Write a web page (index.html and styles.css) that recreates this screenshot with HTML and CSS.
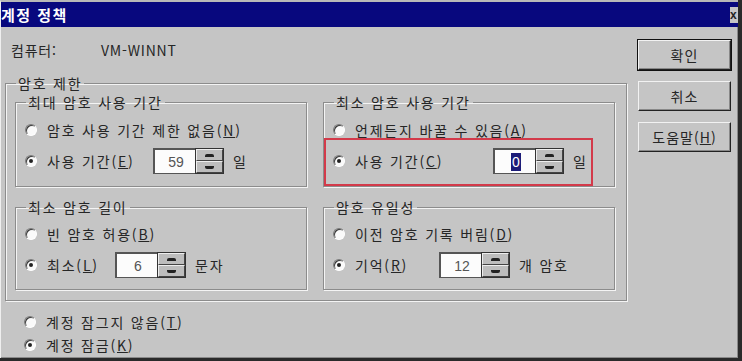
FILE: index.html
```html
<!DOCTYPE html>
<html lang="ko">
<head>
    <meta charset="UTF-8">
    <title>계정 정책</title>
    <link rel="stylesheet" href="styles.css">
</head>
<body>

<div class="dialog">
    <div class="titlebar">
        <span class="title">계정 정책</span>
        <span class="close">x</span>
    </div>
    <div class="content">
        <div class="main">
            <div class="computer">
                <span class="label">컴퓨터:</span>
                <span>VM-WINNT</span>
            </div>

            <fieldset class="group outer">
                <legend>암호 제한</legend>
                <div class="grid">
                    <fieldset class="group sub top">
                        <legend>최대 암호 사용 기간</legend>
                        <div class="row"><span class="radio"></span>암호 사용 기간 제한 없음(<u>N</u>)</div>
                        <div class="row">
                            <span class="radio on"></span><span class="opt w1">사용 기간(<u>E</u>)</span>
                            <span class="spin"><span class="edit">59</span><span class="arrows"><i></i><i></i></span></span>
                            <span class="unit">일</span>
                        </div>
                    </fieldset>
                    <fieldset class="group sub top">
                        <legend>최소 암호 사용 기간</legend>
                        <div class="row"><span class="radio"></span>언제든지 바꿀 수 있음(<u>A</u>)</div>
                        <div class="row">
                            <span class="radio on"></span><span class="opt w2">사용 기간(<u>C</u>)</span>
                            <span class="spin"><span class="edit"><span class="sel">0</span></span><span class="arrows"><i></i><i></i></span></span>
                            <span class="unit">일</span>
                            <span class="highlight"></span>
                        </div>
                    </fieldset>
                    <fieldset class="group sub bottom">
                        <legend>최소 암호 길이</legend>
                        <div class="row"><span class="radio"></span>빈 암호 허용(<u>B</u>)</div>
                        <div class="row">
                            <span class="radio on"></span><span class="opt w3">최소(<u>L</u>)</span>
                            <span class="spin"><span class="edit">6</span><span class="arrows"><i></i><i></i></span></span>
                            <span class="unit">문자</span>
                        </div>
                    </fieldset>
                    <fieldset class="group sub bottom">
                        <legend>암호 유일성</legend>
                        <div class="row"><span class="radio"></span>이전 암호 기록 버림(<u>D</u>)</div>
                        <div class="row">
                            <span class="radio on"></span><span class="opt w4">기억(<u>R</u>)</span>
                            <span class="spin"><span class="edit">12</span><span class="arrows"><i></i><i></i></span></span>
                            <span class="unit">개 암호</span>
                        </div>
                    </fieldset>
                </div>
            </fieldset>

            <div class="lockout">
                <div class="row small"><span class="radio"></span>계정 잠그지 않음(<u>T</u>)</div>
                <div class="row small"><span class="radio on"></span>계정 잠금(<u>K</u>)</div>
            </div>
        </div>

        <div class="buttons">
            <button class="btn default">확인</button>
            <button class="btn">취소</button>
            <button class="btn">도움말(<u>H</u>)</button>
        </div>
    </div>
</div>

</body>
</html>
```

FILE: styles.css
```css
html, body {
    margin: 0;
    background: #2a2a2a;
}
body {
    font-family: "Noto Sans CJK KR", "Liberation Sans", sans-serif;
    font-size: 14px;
    color: #262626;
    width: 742px;
    height: 361px;
    overflow: hidden;
}
.dialog {
    width: 737px;
    height: 356px;
    background: #c5c5c5;
    border-top: 2px solid #b8b8b8;
    border-left: 1px solid #efefef;
    box-shadow: inset -1px -1px #8a8a8a;
}
.titlebar {
    height: 25px;
    background: #08087e;
    display: flex;
    align-items: center;
    justify-content: space-between;
}
.title {
    color: #fff;
    font-weight: bold;
    font-size: 15px;
    letter-spacing: 1.5px;
}
.close {
    width: 8px;
    height: 16px;
    background: #c5c5c5;
    color: #222;
    font-family: "Liberation Sans", sans-serif;
    font-weight: bold;
    font-size: 12px;
    line-height: 16px;
    overflow: hidden;
}
.content {
    display: flex;
}
.main {
    width: 622px;
    padding-left: 4px;
}
.computer {
    display: flex;
    height: 20px;
    align-items: center;
    margin-top: 13px;
    padding-left: 6px;
    letter-spacing: 0.8px;
}
.computer .label {
    width: 90px;
}

/* group boxes */
.group {
    margin: 0;
    min-width: 0;
    border: 1px solid #8c8c8c;
    box-shadow: inset 1px 1px #f4f4f4, 1px 1px #f4f4f4;
}
.group legend {
    padding: 0 2px;
    line-height: 16px;
    letter-spacing: 1.8px;
}
.outer {
    margin-top: 15px;
    padding: 3px 9px 10px 9px;
}
.outer > legend {
    margin-left: 1px;
}
.grid {
    display: grid;
    grid-template-columns: 292px 292px;
    column-gap: 16px;
    row-gap: 12px;
}
.sub {
    padding: 5px 8px 10px 8px;
    display: flex;
    flex-direction: column;
    gap: 1px;
}
.sub legend {
    margin-left: 2px;
}
.sub.bottom {
    padding: 4px 8px 9px 8px;
}

.row {
    position: relative;
    height: 30px;
    display: flex;
    align-items: center;
    letter-spacing: 1.8px;
    white-space: nowrap;
}
.row.small {
    height: 20px;
}
.radio {
    width: 10px;
    height: 10px;
    border-radius: 50%;
    background: #fafafa;
    border: 1px solid #7a7a7a;
    border-right-color: #fff;
    border-bottom-color: #fff;
    box-shadow: inset 1px 1px #3a3a3a;
    margin: 0 10px 0 1px;
    flex: none;
    display: flex;
    align-items: center;
    justify-content: center;
}
.radio.on::after {
    content: "";
    width: 4px;
    height: 4px;
    border-radius: 50%;
    background: #222;
}
.opt.w1 { width: 106px; }
.opt.w2 { width: 138px; }
.opt.w3 { width: 68px; }
.opt.w4 { width: 84px; }

/* spin box */
.spin {
    display: flex;
    height: 26px;
    flex: none;
}
.edit {
    width: 38px;
    background: #fcfcfc;
    border: 1px solid #555;
    border-right: none;
    border-top-width: 2px;
    border-left-width: 2px;
    display: flex;
    align-items: center;
    justify-content: center;
    padding-left: 2px;
    font-family: "Liberation Sans", sans-serif;
    color: #555;
    letter-spacing: 0;
}
.sel {
    background: #1c1c78;
    color: #fff;
    padding: 0 1px;
    line-height: 18px;
}
.arrows {
    width: 27px;
    display: flex;
    flex-direction: column;
    border: 1px solid #333;
}
.arrows i {
    flex: 1;
    background: #bdbdbd;
    border: 1px solid #eee;
    border-right-color: #444;
    border-bottom-color: #444;
    display: flex;
    align-items: center;
    justify-content: center;
}
.arrows i::after {
    content: "";
    width: 9px;
    height: 3px;
    background: #222;
    border-radius: 2px 2px 0 0;
}
.arrows i + i::after {
    border-radius: 0 0 2px 2px;
}
.unit {
    margin-left: 9px;
}
.highlight {
    position: absolute;
    left: -8px;
    top: -8px;
    width: 265px;
    height: 44px;
    border: 2px solid #d33a4a;
}

.lockout {
    margin-top: 11px;
    padding-left: 18px;
    display: flex;
    flex-direction: column;
    gap: 3px;
}

/* buttons */
.buttons {
    display: flex;
    flex-direction: column;
    gap: 11px;
    padding: 13px 0 0 11px;
}
.btn {
    width: 93px;
    height: 30px;
    font-family: inherit;
    font-size: 14px;
    color: #262626;
    letter-spacing: 1px;
    background: #c5c5c5;
    border: 1px solid #f2f2f2;
    border-right-color: #222;
    border-bottom-color: #222;
    box-shadow: inset -1px -1px #888;
    padding: 0;
}
.btn.default {
    outline: 1px solid #111;
}
```
